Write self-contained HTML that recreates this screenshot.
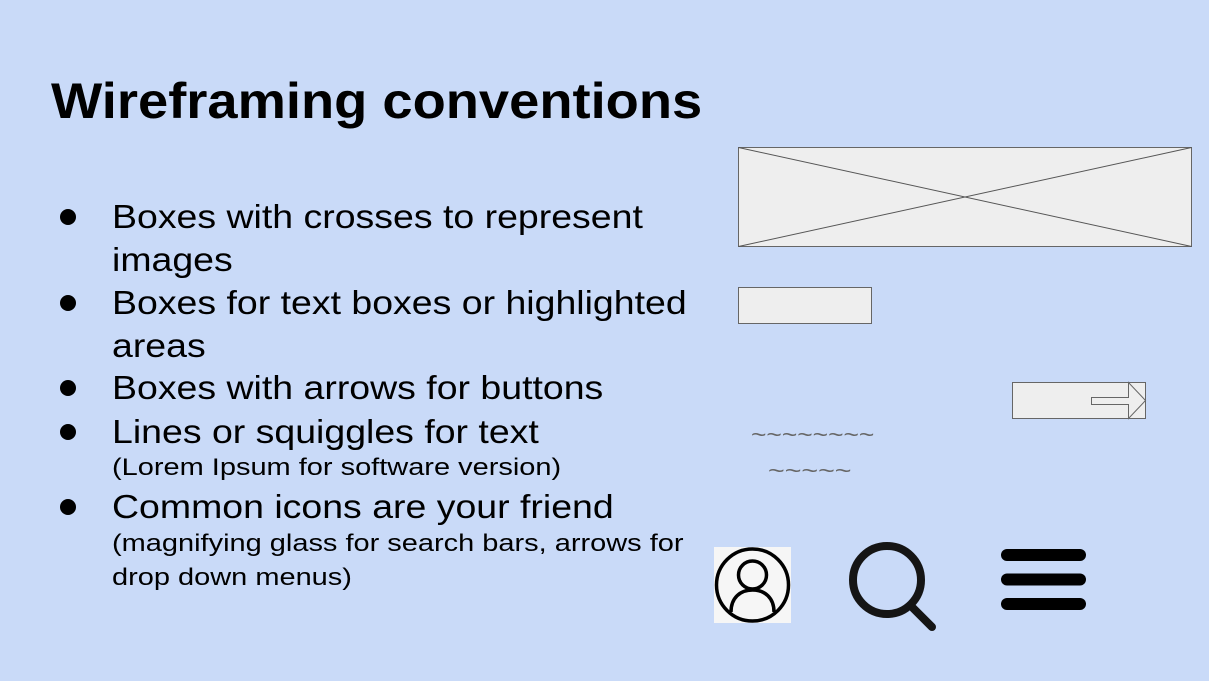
<!DOCTYPE html>
<html><head><style>
body{margin:0;width:1209px;height:681px;background:#c9daf8;position:relative;overflow:hidden;font-family:"Liberation Sans",Arial,sans-serif;color:#000}
h1{position:absolute;left:51px;top:72px;margin:0;font-size:50px;font-weight:bold;transform:scaleX(1.086);transform-origin:0 0;white-space:nowrap}
.b{position:absolute;left:112px;font-size:33px;line-height:43px;white-space:nowrap;transform:scaleX(1.135);transform-origin:0 0}
.d{position:absolute;left:60px;width:16px;height:16px;border-radius:50%;background:#000}
.s{position:absolute;left:112px;font-size:24px;line-height:34px;white-space:nowrap;transform:scaleX(1.207);transform-origin:0 0}
.sq{position:absolute;color:#666;font-size:22px;white-space:nowrap;transform-origin:0 0}
</style></head><body>
<h1>Wireframing conventions</h1>
<div class="d" style="top:209px"></div>
<div class="b" style="top:195px">Boxes with crosses to represent<br>images</div>
<div class="d" style="top:295px"></div>
<div class="b" style="top:281px">Boxes for text boxes or highlighted<br>areas</div>
<div class="d" style="top:380px"></div>
<div class="b" style="top:366px">Boxes with arrows for buttons</div>
<div class="d" style="top:424px"></div>
<div class="b" style="top:410px">Lines or squiggles for text</div>
<div class="s" style="top:451px">(Lorem Ipsum for software version)</div>
<div class="d" style="top:499px"></div>
<div class="b" style="top:485px">Common icons are your friend</div>
<div class="s" style="top:527px">(magnifying glass for search bars, arrows for<br>drop down menus)</div>
<div class="sq" style="left:751px;top:422px;transform:scaleX(1.2)">~~~~~~~~</div>
<div class="sq" style="left:768px;top:458px;transform:scaleX(1.3)">~~~~~</div>
<svg width="1209" height="681" style="position:absolute;left:0;top:0">
<rect x="738.5" y="147.5" width="453" height="99" fill="#eeeeee" stroke="#666"/>
<line x1="738.5" y1="147.5" x2="1191.5" y2="246.5" stroke="#555"/>
<line x1="738.5" y1="246.5" x2="1191.5" y2="147.5" stroke="#555"/>
<rect x="738.5" y="287.5" width="133" height="36" fill="#eeeeee" stroke="#666"/>
<rect x="1012.5" y="382.5" width="133" height="36" fill="#eeeeee" stroke="#666"/>
<path d="M1091.5 397.5H1128.5V382.5L1145.5 400.5L1128.5 418.5V404.5H1091.5Z" fill="#eeeeee" stroke="#666"/>
<rect x="714" y="547" width="77" height="76" fill="#f6f6f6"/>
<circle cx="752.5" cy="585" r="36" fill="none" stroke="#000" stroke-width="3.5"/>
<circle cx="752.5" cy="575" r="14" fill="none" stroke="#000" stroke-width="3.5"/>
<path d="M731 612C731 598 740 590 752.5 590C765 590 774 598 774 612" fill="none" stroke="#000" stroke-width="3.5"/>
<circle cx="887" cy="580" r="34" fill="none" stroke="#151515" stroke-width="8"/>
<line x1="913" y1="608" x2="932" y2="627" stroke="#151515" stroke-width="8" stroke-linecap="round"/>
<g stroke="#000" stroke-width="12" stroke-linecap="round">
<line x1="1007" y1="555" x2="1080" y2="555"/>
<line x1="1007" y1="579.5" x2="1080" y2="579.5"/>
<line x1="1007" y1="604" x2="1080" y2="604"/>
</g>
</svg>
</body></html>
